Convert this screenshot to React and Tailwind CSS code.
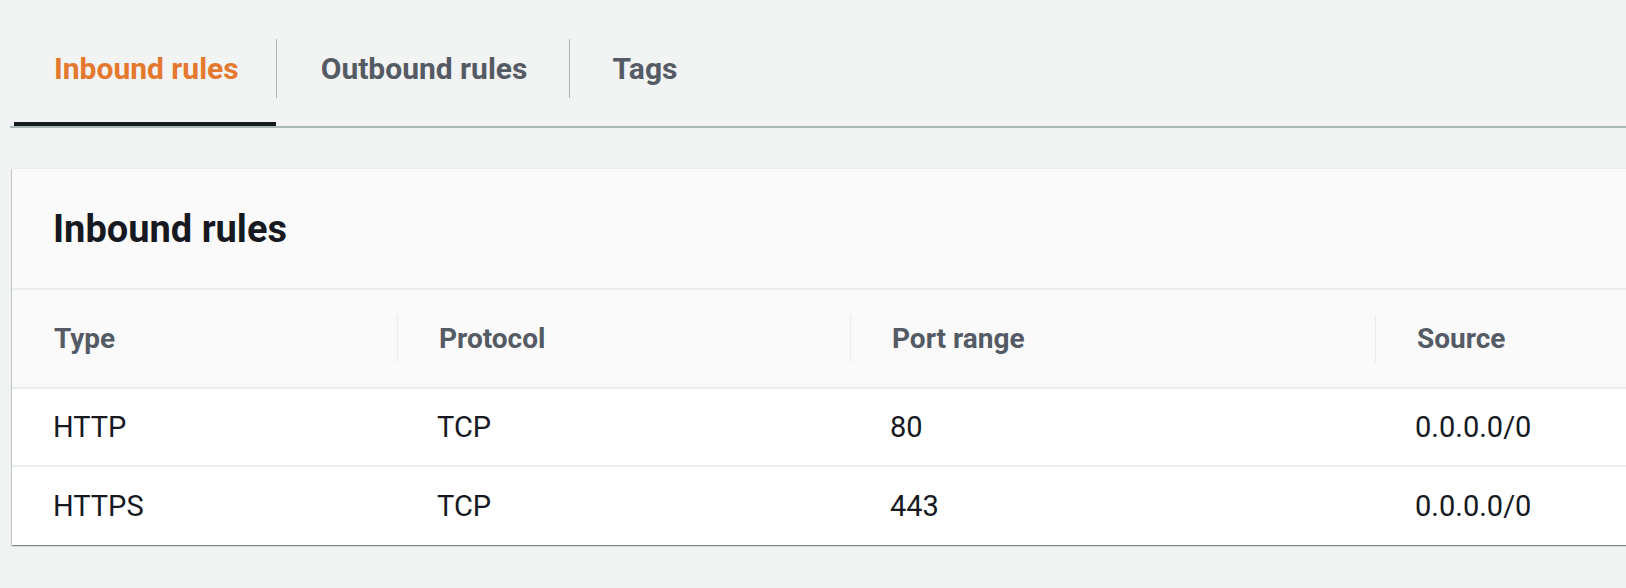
import React from "react";

const font = { fontFamily: "Roboto, 'Noto Sans', sans-serif" };

function Tab({ label, active, divider, pl, pr }) {
  return (
    <div
      className={`flex flex-col ${active ? "border-b-4 border-[#16191f]" : "border-b-4 border-transparent"} pt-[39px] pb-[24px]`}
    >
      <div
        className={`flex h-[59px] items-center ${divider ? "border-l border-[#aab7b8]" : ""} ${pl} ${pr}`}
      >
        <span
          className={`text-[30px] font-bold leading-[36px] ${active ? "text-[#e5782f]" : "text-[#545b64]"}`}
        >
          {label}
        </span>
      </div>
    </div>
  );
}

const cols = "grid grid-cols-[385px_453px_525px_1fr]";

function HeadCell({ label, divider }) {
  return (
    <div className="flex items-center">
      {divider && <div className="h-[48px] w-px bg-[#eaeded]" />}
      <span
        className={`text-[28px] font-bold leading-[34px] text-[#545b64] ${divider ? "pl-[41px]" : "pl-[42px]"}`}
      >
        {label}
      </span>
    </div>
  );
}

function Row({ cells, last }) {
  return (
    <div className={`${cols} h-[78px] bg-white ${last ? "" : "border-b-2 border-[#eaeded]"}`}>
      {cells.map((c, i) => (
        <div key={i} className={`flex items-center ${i === 0 ? "pl-[41px]" : "pl-[40px]"}`}>
          <span className="text-[29px] leading-[34px] text-[#16191f]">{c}</span>
        </div>
      ))}
    </div>
  );
}

export default function App() {
  return (
    <div className="min-h-[588px] w-[1626px] overflow-hidden bg-[#f2f3f3] antialiased" style={font}>
      <div className="ml-[10px] flex border-b-2 border-[#aab7b8] pl-[4px]">
        <Tab label="Inbound rules" active pl="pl-[40px]" pr="pr-[37px]" />
        <Tab label="Outbound rules" divider pl="pl-[44px]" pr="pr-[42px]" />
        <Tab label="Tags" divider pl="pl-[42px]" pr="pr-[40px]" />
      </div>
      <div className="ml-[12px] mt-[40px] w-[1660px] border-t border-[#eaeded] bg-[#fafafa] shadow-[0_1px_1px_0_rgba(0,28,36,0.3),1px_1px_1px_0_rgba(0,28,36,0.15),-1px_1px_1px_0_rgba(0,28,36,0.15)]">
        <div className="flex h-[121px] items-center border-b-2 border-[#eaeded] pl-[41px]">
          <h2 className="text-[38px] font-bold leading-[44px] text-[#16191f]">Inbound rules</h2>
        </div>
        <div className={`${cols} h-[99px] border-b-2 border-[#eaeded]`}>
          <HeadCell label="Type" />
          <HeadCell label="Protocol" divider />
          <HeadCell label="Port range" divider />
          <HeadCell label="Source" divider />
        </div>
        <Row cells={["HTTP", "TCP", "80", "0.0.0.0/0"]} />
        <Row cells={["HTTPS", "TCP", "443", "0.0.0.0/0"]} last />
      </div>
    </div>
  );
}
